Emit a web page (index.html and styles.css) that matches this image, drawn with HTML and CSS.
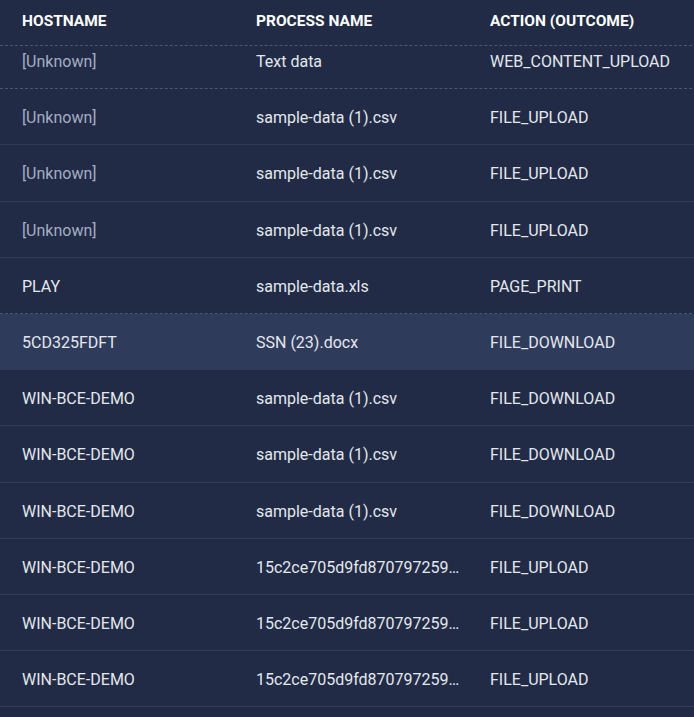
FILE: index.html
```html
<!DOCTYPE html>
<html lang="en">
<head>
  <meta charset="UTF-8">
  <meta name="viewport" content="width=device-width, initial-scale=1.0">
  <title>Events</title>
  <link rel="stylesheet" href="styles.css">
</head>
<body>
  <div class="events">
    <div class="row head">
      <div class="cell">HOSTNAME</div>
      <div class="cell">PROCESS NAME</div>
      <div class="cell">ACTION (OUTCOME)</div>
    </div>

    <div class="rows">
      <div class="row dashed">
        <div class="cell muted">[Unknown]</div>
        <div class="cell">Text data</div>
        <div class="cell">WEB_CONTENT_UPLOAD</div>
      </div>
      <div class="row">
        <div class="cell muted">[Unknown]</div>
        <div class="cell">sample-data (1).csv</div>
        <div class="cell">FILE_UPLOAD</div>
      </div>
      <div class="row">
        <div class="cell muted">[Unknown]</div>
        <div class="cell">sample-data (1).csv</div>
        <div class="cell">FILE_UPLOAD</div>
      </div>
      <div class="row">
        <div class="cell muted">[Unknown]</div>
        <div class="cell">sample-data (1).csv</div>
        <div class="cell">FILE_UPLOAD</div>
      </div>
      <div class="row dashed">
        <div class="cell">PLAY</div>
        <div class="cell">sample-data.xls</div>
        <div class="cell">PAGE_PRINT</div>
      </div>
      <div class="row active">
        <div class="cell">5CD325FDFT</div>
        <div class="cell">SSN (23).docx</div>
        <div class="cell">FILE_DOWNLOAD</div>
      </div>
      <div class="row">
        <div class="cell">WIN-BCE-DEMO</div>
        <div class="cell">sample-data (1).csv</div>
        <div class="cell">FILE_DOWNLOAD</div>
      </div>
      <div class="row">
        <div class="cell">WIN-BCE-DEMO</div>
        <div class="cell">sample-data (1).csv</div>
        <div class="cell">FILE_DOWNLOAD</div>
      </div>
      <div class="row">
        <div class="cell">WIN-BCE-DEMO</div>
        <div class="cell">sample-data (1).csv</div>
        <div class="cell">FILE_DOWNLOAD</div>
      </div>
      <div class="row">
        <div class="cell">WIN-BCE-DEMO</div>
        <div class="cell">15c2ce705d9fd870797259f3a1c07e5b.pdf</div>
        <div class="cell">FILE_UPLOAD</div>
      </div>
      <div class="row">
        <div class="cell">WIN-BCE-DEMO</div>
        <div class="cell">15c2ce705d9fd870797259f3a1c07e5b.pdf</div>
        <div class="cell">FILE_UPLOAD</div>
      </div>
      <div class="row">
        <div class="cell">WIN-BCE-DEMO</div>
        <div class="cell">15c2ce705d9fd870797259f3a1c07e5b.pdf</div>
        <div class="cell">FILE_UPLOAD</div>
      </div>
      <div class="row">
        <div class="cell">WIN-BCE-DEMO</div>
        <div class="cell">sample-data (1).csv</div>
        <div class="cell">FILE_UPLOAD</div>
      </div>
    </div>
  </div>
</body>
</html>
```

FILE: styles.css
```css
* { box-sizing: border-box; margin: 0; padding: 0; }
html, body {
  height: 100%;
  overflow: hidden;
}
body {
  font-family: Roboto, 'Liberation Sans', sans-serif;
  background: #212b45;
  color: #e3e7ee;
  font-size: 16px;
}
.events {
  width: 702px;
}
.row {
  display: grid;
  grid-template-columns: 234px 234px 234px;
  height: 56.2px;
  align-items: center;
  border-bottom: 1px solid #303b58;
}
.row.dashed {
  border-bottom: 1px dashed #4b5675;
}
.row.active {
  background: #2f3b5a;
}
.cell {
  padding: 3px 8px 0 22px;
  white-space: nowrap;
  overflow: hidden;
  text-overflow: ellipsis;
  line-height: 20px;
}
.muted {
  color: #a3aec4;
}
.head {
  position: relative;
  z-index: 2;
  height: 46px;
  background: #212b45;
  border-bottom: 1px dashed #4b5675;
  font-size: 15.5px;
  font-weight: 700;
  color: #ffffff;
  padding-bottom: 3px;
}
.head .cell {
  padding-top: 0;
}
/* list is scrolled a little under the header */
.rows {
  margin-top: -13px;
}
```
